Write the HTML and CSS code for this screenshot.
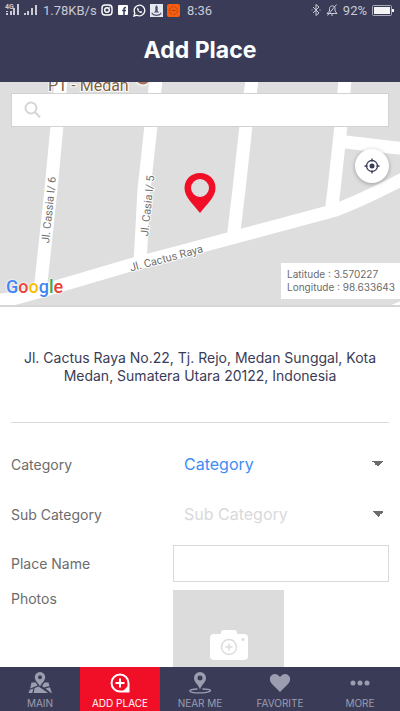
FILE: index.html
```
<!DOCTYPE html>
<html lang="en">

<head>
    <meta charset="UTF-8">
    <meta name="viewport" content="width=device-width, initial-scale=1.0">
    <title>Add Place</title>
    <link rel="stylesheet" href="styles.css">
</head>

<body>
    <header>
        <div class="status">
            <div class="status-left">
                <svg width="34" height="14" viewBox="0 0 34 14" fill="#c9cad6">
                    <text x="0" y="6" font-size="7" font-family="Roboto, sans-serif" font-weight="700">4G</text>
                    <path d="M1 8h2v1H1zM1 10h2v2H1zM5 8h2v4H5zM8 5h2v7H8zM12 1h2v11h-2zM19 10h2v2h-2zM22 8h2v4h-2zM26 5h2v7h-2zM30 2h2v10h-2z"/>
                </svg>
                <span class="speed">1.78KB/s</span>
                <svg width="12" height="12" viewBox="0 0 12 12" fill="none" stroke="#fff" stroke-width="1.4">
                    <rect x="1" y="1" width="10" height="10" rx="3"/>
                    <circle cx="6" cy="6" r="2.3"/>
                    <circle cx="8.8" cy="3.2" r=".3" stroke-width=".8"/>
                </svg>
                <svg width="12" height="12" viewBox="0 0 12 12">
                    <rect x="1" y="1" width="10" height="10" rx="1" fill="#fff"/>
                    <path d="M7 11V4.600Q7 3.400 9 3.400M5.200 6.500h3.800" fill="none" stroke="#3a3c57" stroke-width="1.500"/>
                </svg>
                <svg width="13" height="13" viewBox="0 0 13 13">
                    <path d="M1 12l.8-3A5.300 5.300 0 1 1 4 11.200z" fill="none" stroke="#fff" stroke-width="1.300"/>
                    <path d="M4.600 3.700c-1.600 1.300.8 5 3.300 5.300.9 0 1.400-.6 1.400-1.200L7.800 7l-.7.700C6.300 7.400 5.700 6.700 5.400 6l.6-.7z" fill="#fff"/>
                </svg>
                <svg width="13" height="13" viewBox="0 0 13 13">
                    <rect width="13" height="13" fill="#e6e8f0"/>
                    <path d="M6.500 1l1.200 2v4l1.500 1.500h-5.400L5.300 7V3zM2 8c1 3.500 8 3.500 9 0l.5 2C9 12.500 4 12.500 1.500 10z" fill="#50536f"/>
                </svg>
                <svg width="13" height="13" viewBox="0 0 13 13">
                    <rect width="13" height="13" rx="2" fill="#fb5c0c"/>
                    <circle cx="6.500" cy="6.500" r="4" fill="none" stroke="#9a4a2c" stroke-dasharray="3 1"/>
                    <path d="M4.500 6.500h4" stroke="#9a4a2c"/>
                </svg>
            </div>
            <time>8:36</time>
            <div class="status-right">
                <svg width="10" height="12" viewBox="0 0 10 12" fill="none" stroke="#c9cad6">
                    <path d="M2 3l6 6-3 2.500V.5L8 3 2 9M.5 6h1M8.500 6h1"/>
                </svg>
                <svg width="12" height="12" viewBox="0 0 12 12" fill="none" stroke="#c9cad6">
                    <path d="M1 9.500h10L9 7V4.500C9 1 3.500 1 3.500 4.500V7zM5 11h2M10.500.5L1.500 11.500"/>
                </svg>
                <span>92%</span>
                <svg width="22" height="11" viewBox="0 0 22 11">
                    <rect x=".5" y=".5" width="19" height="10" rx="1" fill="none" stroke="#a9aaba"/>
                    <path d="M2 2h16v7H2zM20 4h2v3h-2z" fill="#f4f4f7"/>
                </svg>
            </div>
        </div>
        <h1>Add Place</h1>
    </header>

    <main>
        <section class="map">
            <svg class="map-canvas" viewBox="0 0 400 224" preserveAspectRatio="xMidYMid slice">
                <rect width="400" height="224" fill="#dedede"/>
                <g fill="none" stroke="#fff" stroke-width="13">
                    <path d="M61 -2L57 44 51 108 40 210"/>
                    <path d="M156 -2L151 44 144 108 140 182"/>
                    <path d="M252 -2L246 44 239 108 233 158"/>
                    <path d="M345 -2L341 44 334 108 331 132"/>
                    <path d="M341 60L402 67"/>
                    <path d="M-4 219L14 217 47 208 132 183 200 165 334 129Q355 122 404 97"/>
                </g>
                <path d="M390 224l10-4v4z" fill="#fff"/>
                <g class="street">
                    <text transform="translate(49 162) rotate(-84)">Jl. Cassia I/ 6</text>
                    <text transform="translate(148 155) rotate(-84)">Jl. Casia I/ 5</text>
                    <text transform="translate(131 190) rotate(-15)">Jl. Cactus Raya</text>
                </g>
                <text class="poi" x="48" y="9">PT - Medan</text>
                <circle cx="143" cy="-4" r="8" fill="#a87458" stroke="#f1f1f1" stroke-width="2"/>
            </svg>
            <form class="search">
                <svg width="18" height="18" viewBox="0 0 18 18" fill="none" stroke="#d5d5d5" stroke-width="2">
                    <circle cx="7" cy="7" r="5.500"/>
                    <path d="M11 11l5 5.500"/>
                </svg>
                <input type="search" aria-label="Search location">
            </form>
            <svg class="pin" width="32" height="40" viewBox="0 0 32 40">
                <path d="M16 0C7 0 .5 6.500.5 15 .5 24 9 31 16 40c7-9 15.500-16 15.500-25C31.500 6.500 25 0 16 0zm0 6a9 9 0 1 1 0 18 9 9 0 0 1 0-18z" fill="#f10f28" fill-rule="evenodd"/>
            </svg>
            <button class="locate" type="button" aria-label="My location">
                <svg width="16" height="16" viewBox="0 0 16 16" fill="none" stroke="#3a3c57" stroke-width="1.300">
                    <circle cx="8" cy="8" r="5.500"/>
                    <circle cx="8" cy="8" r="2.500" fill="#3a3c57" stroke="none"/>
                    <path d="M8 .5v3M8 12.500v3M.5 8h3M12.500 8h3"/>
                </svg>
            </button>
            <div class="google"><span class="blue">G</span><span class="red">o</span><span class="yellow">o</span><span class="blue">g</span><span class="green">l</span><span class="red">e</span></div>
            <div class="coords">
                <div>Latitude : 3.570227</div>
                <div>Longitude : 98.633643</div>
            </div>
        </section>

        <p class="address">Jl. Cactus Raya No.22, Tj. Rejo, Medan Sunggal, Kota Medan, Sumatera Utara 20122, Indonesia</p>

        <form class="place-form">
            <div class="row">
                <label for="category">Category</label>
                <select id="category">
                    <option>Category</option>
                </select>
            </div>
            <div class="row">
                <label for="sub-category">Sub Category</label>
                <select id="sub-category" class="empty">
                    <option>Sub Category</option>
                </select>
            </div>
            <div class="row row-name">
                <label for="place-name">Place Name</label>
                <input type="text" id="place-name">
            </div>
            <div class="row row-photos">
                <label for="photos">Photos</label>
                <button type="button" id="photos" class="photo">
                    <svg width="38" height="31" viewBox="0 0 38 31">
                        <path d="M4 4h7V3q0-3 3-3h10q3 0 3 3v1h7q4 0 4 4v18q0 4-4 4H4q-4 0-4-4V8q0-4 4-4z" fill="#fff"/>
                        <g fill="none" stroke="#dcdcdc" stroke-width="1.500">
                            <circle cx="19" cy="17" r="7.500"/>
                            <path d="M19 13.500v7M15.500 17h7"/>
                        </g>
                        <circle cx="33" cy="9.500" r="1.500" fill="#dcdcdc"/>
                    </svg>
                </button>
            </div>
        </form>
    </main>

    <nav>
        <a href="#main">
            <svg width="24" height="22" viewBox="0 0 24 22" fill="currentColor">
                <path d="M12 0a5.200 5.200 0 0 0-5.200 5.200C6.800 9 10.500 11 12 14.500 13.500 11 17.200 9 17.200 5.200A5.200 5.200 0 0 0 12 0zm0 3.200a2 2 0 1 1 0 4 2 2 0 0 1 0-4z" fill-rule="evenodd"/>
                <path d="M3.500 10.500h4.200l2 3-7.500 3zM16.500 10.500h4l1 3.500-5.500 1.500-2-1.500zM1.800 17.800l3.500-1.400-1 4.600H.5zM6.600 16l4-1.500 9.500 6.500H5.600zM17.500 16.500l4.500-1.300 1.800 5.800h-.8z"/>
            </svg>
            MAIN
        </a>
        <a href="#add" class="active">
            <svg width="24" height="22" viewBox="0 0 24 22" fill="none" stroke="currentColor">
                <path d="M12 2.500a8.500 8.500 0 1 0 0 17h8.500V11A8.500 8.500 0 0 0 12 2.500z" stroke-width="2"/>
                <path d="M14 20h6.500v-6.500z" fill="currentColor" stroke="none"/>
                <path d="M12 6.500v9M7.500 11h9" stroke-width="2"/>
            </svg>
            ADD PLACE
        </a>
        <a href="#near">
            <svg width="24" height="22" viewBox="0 0 24 22" fill="currentColor">
                <path d="M12 0a6 6 0 0 0-6 6c0 4.500 4.500 6.500 6 11.500C13.500 12.500 18 10.500 18 6a6 6 0 0 0-6-6zm0 3.500a2.500 2.500 0 1 1 0 5 2.500 2.500 0 0 1 0-5z" fill-rule="evenodd"/>
                <path d="M9.500 17C-1 17.500 0 20.500 8 20.800c8 .4 15-1 14.500-2.300-.4-1-4-1.500-8-1.500" fill="none" stroke="currentColor" stroke-width="1.300"/>
            </svg>
            NEAR ME
        </a>
        <a href="#favorite">
            <svg width="24" height="22" viewBox="0 0 24 22" fill="currentColor">
                <path d="M12 20L4 12C-.5 7 3 2 7 2q3 0 5 3 2-3 5-3c4 0 7.500 5 3 10z"/>
            </svg>
            FAVORITE
        </a>
        <a href="#more">
            <svg width="24" height="22" viewBox="0 0 24 22" fill="currentColor">
                <circle cx="5" cy="11" r="2.500"/>
                <circle cx="12" cy="11" r="2.500"/>
                <circle cx="19" cy="11" r="2.500"/>
            </svg>
            MORE
        </a>
    </nav>
</body>

</html>
```

FILE: styles.css
```
* {
    box-sizing: border-box;
}

body {
    margin: 0;
    height: 100vh;
    display: flex;
    flex-direction: column;
    background-color: #ffffff;
    color: #6c6c6c;
    font-family: Inter, sans-serif;
    font-size: 14px;
}

svg {
    display: block;
    flex-shrink: 0;
}

header {
    background-color: #3a3c57;
    color: #ffffff;
}

.status {
    display: grid;
    grid-template-columns: 1fr auto 1fr;
    align-items: center;
    height: 20px;
    padding: 0 6px 0 5px;
    font-family: Roboto, sans-serif;
    font-size: 13px;
    color: #c9cad6;
}

.status-left,
.status-right {
    display: flex;
    align-items: center;
    gap: 4px;
}

.status-right {
    justify-content: flex-end;
    gap: 5px;
}

h1 {
    margin: 0;
    height: 62px;
    line-height: 60px;
    text-align: center;
    font-size: 23px;
    font-weight: 700;
}

main {
    flex: 1;
    min-height: 0;
    overflow-y: auto;
    scrollbar-width: none;
}

/* map */
.map {
    position: relative;
    height: 225px;
    border-bottom: 2px solid #d6d6d6;
}

.map-canvas {
    width: 100%;
    height: 100%;
}

.street,
.poi {
    font-family: Roboto, sans-serif;
    font-size: 11px;
    fill: #6f6f6f;
    stroke: #ffffff;
    stroke-width: 2px;
    paint-order: stroke;
}

.poi {
    font-size: 16px;
    fill: #80603f;
}

.search {
    position: absolute;
    top: 11px;
    left: 11px;
    right: 11px;
    height: 34px;
    display: flex;
    align-items: center;
    gap: 8px;
    padding: 0 12px;
    background-color: #ffffff;
    border: 1px solid #d2d2d2;
}

.search input {
    flex: 1;
    min-width: 0;
    border: none;
    outline: none;
    background: none;
    font: inherit;
}

.pin {
    position: absolute;
    top: 91px;
    left: calc(50% - 16px);
}

.locate {
    position: absolute;
    top: 67px;
    right: 11px;
    width: 34px;
    height: 34px;
    display: flex;
    align-items: center;
    justify-content: center;
    padding: 0;
    border: none;
    border-radius: 50%;
    background-color: #ffffff;
    box-shadow: 0 1px 4px rgba(0, 0, 0, 0.3);
}

.google {
    position: absolute;
    left: 6px;
    bottom: 6px;
    font-family: Roboto, sans-serif;
    font-size: 18px;
    line-height: 24px;
    font-weight: 500;
    text-shadow: 0 0 2px #ffffff, 0 0 2px #ffffff;
}

.blue {
    color: #4285f4;
}

.red {
    color: #ea4335;
}

.yellow {
    color: #fbbc05;
}

.green {
    color: #34a853;
}

.coords {
    position: absolute;
    right: 0;
    bottom: 6px;
    padding: 5px 5px 5px 6px;
    background-color: #ffffff;
    font-size: 10px;
    line-height: 13px;
}

/* form */
.address {
    margin: 0 11px;
    padding: 42px 10px 37px;
    border-bottom: 1px solid #d9d9d9;
    color: #3a3c57;
    line-height: 18px;
    text-align: center;
}

.place-form {
    padding: 16px 11px;
}

.row {
    display: grid;
    grid-template-columns: 3fr 4fr;
    align-items: center;
    min-height: 50px;
}

.row select {
    width: 100%;
    height: 36px;
    padding: 0 11px;
    border: none;
    appearance: none;
    background: linear-gradient(to bottom left, #6c6c6c 50%, transparent 50%) right 11px center / 6px 6px no-repeat,
        linear-gradient(to bottom right, #6c6c6c 50%, transparent 50%) right 5px center / 6px 6px no-repeat;
    color: #3d8df5;
    font-family: inherit;
    font-size: 16px;
}

.row select.empty {
    color: #d9d9d9;
}

.row input {
    width: 100%;
    height: 37px;
    padding: 0 10px;
    border: 1px solid #d9d9d9;
    font: inherit;
}

.row-name {
    min-height: 48px;
}

.row-photos {
    align-items: start;
    padding-top: 3px;
}

.photo {
    width: 111px;
    height: 111px;
    display: flex;
    align-items: center;
    justify-content: center;
    padding: 0;
    border: none;
    background-color: #dcdcdc;
}

/* bottom bar */
nav {
    display: flex;
    background-color: #3a3c57;
}

nav a {
    flex: 1;
    height: 44px;
    display: flex;
    flex-direction: column;
    align-items: center;
    gap: 4px;
    padding-top: 5px;
    color: #9c9db0;
    font-size: 10px;
    line-height: 10px;
    text-decoration: none;
    white-space: nowrap;
}

nav a.active {
    background-color: #f10f28;
    color: #ffffff;
}
```
